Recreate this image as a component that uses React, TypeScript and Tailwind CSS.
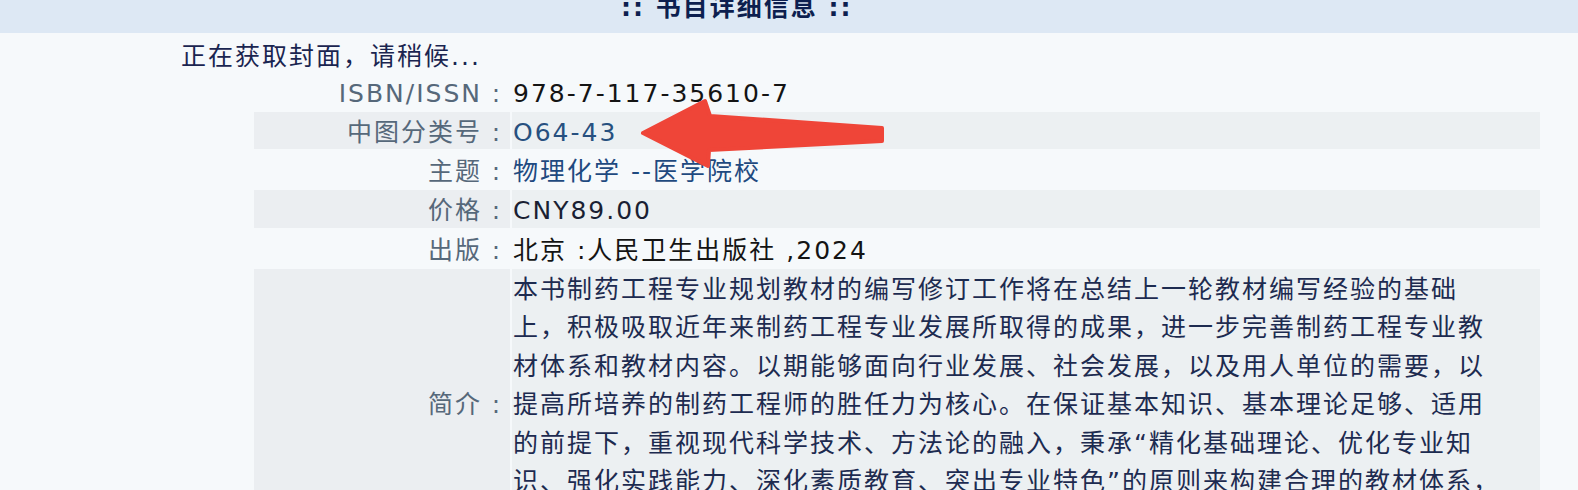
import React from 'react';

type Row = {
  label: string;
  value: React.ReactNode;
  shaded?: boolean;
};

const intro = [
  '本书制药工程专业规划教材的编写修订工作将在总结上一轮教材编写经验的基础',
  '上，积极吸取近年来制药工程专业发展所取得的成果，进一步完善制药工程专业教',
  '材体系和教材内容。以期能够面向行业发展、社会发展，以及用人单位的需要，以',
  '提高所培养的制药工程师的胜任力为核心。在保证基本知识、基本理论足够、适用',
  '的前提下，重视现代科学技术、方法论的融入，秉承“精化基础理论、优化专业知',
  '识、强化实践能力、深化素质教育、突出专业特色”的原则来构建合理的教材体系，',
];

const rows: Row[] = [
  { label: 'ISBN/ISSN', value: <span className="text-[#141414]">978-7-117-35610-7</span> },
  { label: '中图分类号', value: <span className="text-[#27507f]">O64-43</span>, shaded: true },
  { label: '主题', value: <span className="text-[#1f4a80]">物理化学 --医学院校</span> },
  { label: '价格', value: <span className="text-[#1a1f33]">CNY89.00</span>, shaded: true },
  { label: '出版', value: <span className="text-[#141414]">北京 :人民卫生出版社 ,2024</span> },
];

const Colon = () => <span className="inline-block w-[28px] text-center tracking-normal">:</span>;

export default function App() {
  return (
    <div className="relative h-screen overflow-hidden bg-[#f6f9fb] font-['DejaVu_Sans','Noto_Sans_CJK_SC',sans-serif] text-[25px] tracking-[2px]">
      {/* Title bar */}
      <div className="h-[33px] overflow-hidden bg-[#dde8f4]">
        <div className="-mt-[6px] pl-[621px] font-bold leading-[27px] text-[#0d1f4f]">
          :: 书目详细信息 ::
        </div>
      </div>

      {/* Cover loading */}
      <div className="pl-[181px] pt-[8px] leading-[31.5px] text-[#1a2550]">正在获取封面，请稍候...</div>

      {/* Detail table */}
      <div className="ml-[254px] grid w-[1286px] grid-cols-[256px_1fr] gap-x-[2px] gap-y-[1.75px]">
        {rows.map((r) => (
          <React.Fragment key={r.label}>
            <div className={`h-[37.5px] pt-[4px] text-right leading-[33.5px] text-[#56687a] ${r.shaded ? 'bg-[#ebeef1]' : ''}`}>
              {r.label}
              <Colon />
            </div>
            <div className={`h-[37.5px] pl-[1px] pt-[4px] leading-[33.5px] ${r.shaded ? 'bg-[#ecf0f2]' : ''}`}>{r.value}</div>
          </React.Fragment>
        ))}
        <div className="bg-[#ebeef1] pt-[117.5px] text-right leading-[38.5px] text-[#56687a]">
          简介
          <Colon />
        </div>
        <div className="bg-[#ecf0f2] pl-[1px] pt-[2px] leading-[38.5px] text-[#1d2b50]">
          {intro.map((line) => (
            <div key={line} className="whitespace-nowrap">
              {line}
            </div>
          ))}
        </div>
      </div>

      {/* Red annotation arrow */}
      <svg className="pointer-events-none absolute left-0 top-0" width="1578" height="490">
        <path
          d="M643 133 L705 101 L710 116 L882 128 L882 141 L709 150 L708 166 Z"
          fill="#ef4538"
          stroke="#ef4538"
          strokeWidth="4"
          strokeLinejoin="round"
        />
      </svg>
    </div>
  );
}
